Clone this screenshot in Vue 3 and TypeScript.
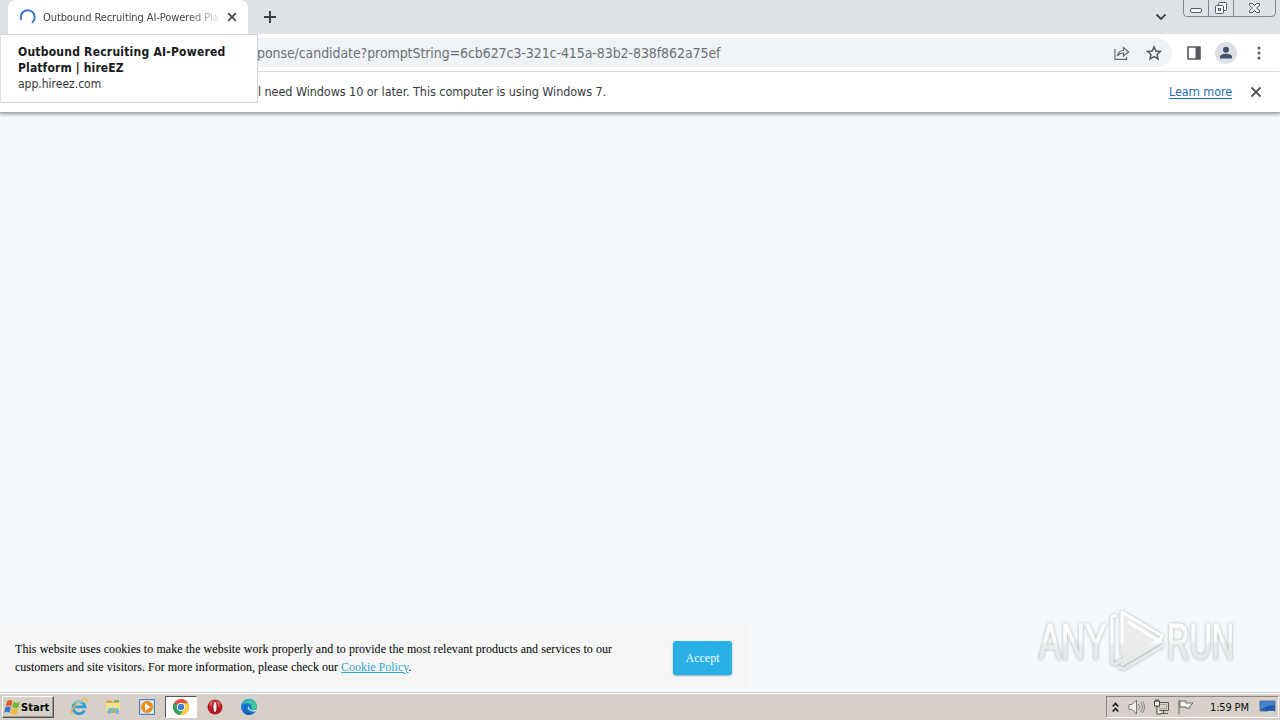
<script setup lang="ts">
const address: string = 'ponse/candidate?promptString=6cb627c3-321c-415a-83b2-838f862a75ef'
const clock: string = '1:59 PM'
</script>

<template>
  <div class="screen">
    <header class="tabs">
      <div class="tab">
        <svg class="spinner" width="18" height="18" viewBox="0 0 18 18"><path d="M2.300 12A7 7 0 1 1 13 14.700" fill="none" stroke="#3978c8" stroke-width="2"/></svg>
        <span class="tab-title">Outbound Recruiting AI-Powered Pla</span>
        <svg class="tab-close" width="10" height="10" viewBox="0 0 10 10"><path d="M1.200 1.200l7.600 7.600M8.800 1.200l-7.600 7.600" stroke="#45494d" stroke-width="1.700"/></svg>
      </div>
      <svg class="plus" width="14" height="14" viewBox="0 0 14 14"><path d="M7 1v12M1 7h12" stroke="#3c4043" stroke-width="2"/></svg>
      <svg class="chevron" width="12" height="8" viewBox="0 0 12 8"><path d="M1.500 1.500L6 6l4.500-4.500" fill="none" stroke="#3c4043" stroke-width="1.800"/></svg>
      <svg class="window-controls" width="94" height="18" viewBox="0 0 94 18">
        <g fill="none" stroke="#80858d">
          <path d="M.5 0v13q0 3.500 3 3.500h85q4 0 4-3.500V0M25.500 0v16M50.500 0v16"/>
          <g stroke="#555b64"><rect x="7.500" y="8.500" width="11" height="4" rx="1.500" fill="#f5f6f8"/><rect x="35.500" y="2.500" width="8" height="8" rx="1" fill="#f5f6f8"/><rect x="32.500" y="5.500" width="8" height="8" rx="1" fill="#f5f6f8"/><rect x="35.500" y="8.500" width="2" height="2"/>
          <path d="M66.500 3.500h3l2 2 2-2h3v2l-3 2.500 3 2.500v2h-3l-2-2-2 2h-3v-2l3-2.500-3-2.500z" fill="#f5f6f8"/></g>
        </g>
      </svg>
    </header>

    <nav class="toolbar">
      <div class="omnibox">
        <span class="url">{{ address }}</span>
        <svg class="share" width="16" height="16" viewBox="0 0 16 16" fill="none" stroke="#62666b" stroke-width="1.200"><path d="M1 4v10.300h11.500V12M3.500 11c.5-4 2.500-5.500 6-5.500V2.500l5 4.500-5 4V8C7 8 5 8.800 3.500 11z"/></svg>
        <svg class="star" width="16" height="16" viewBox="0 0 16 16"><path d="M8 1.800l1.850 4.150 4.600.45-3.450 3.050 1 4.500L8 11.600l-4 2.350 1-4.500L1.550 6.400l4.600-.45z" fill="none" stroke="#55595e" stroke-width="1.500"/></svg>
      </div>
      <svg class="panel" width="14" height="14" viewBox="0 0 14 14"><path d="M1 1h12v12H1z" fill="none" stroke="#55595e" stroke-width="1.600"/><path d="M8.500 1H13v12H8.500z" fill="#55595e"/></svg>
      <svg class="avatar" width="22" height="22" viewBox="0 0 22 22"><circle cx="11" cy="11" r="11" fill="#dde0e5"/><circle cx="11" cy="7.800" r="3" fill="#46516c"/><path d="M5 16.500v-1.700c0-4 12-4 12 0v1.700z" fill="#46516c"/></svg>
      <svg class="menu" width="4" height="14" viewBox="0 0 4 14" fill="#55595e"><circle cx="2" cy="2" r="1.500"/><circle cx="2" cy="7" r="1.500"/><circle cx="2" cy="12" r="1.500"/></svg>
    </nav>

    <section class="infobar">
      <span class="notice">l need Windows 10 or later. This computer is using Windows 7.</span>
      <a class="learn">Learn more</a>
      <svg class="info-close" width="12" height="12" viewBox="0 0 12 12"><path d="M1.500 1.500l9 9M10.500 1.500l-9 9" stroke="#55595e" stroke-width="1.900"/></svg>
    </section>

    <main class="page">
      <section class="cookies">
        <p class="cookie-copy"><span class="line-one">This website uses cookies to make the website work properly and to provide the most relevant products and services to our</span><br><span class="line-two">customers and site visitors. For more information, please check our <a>Cookie Policy</a>.</span></p>
        <button class="accept">Accept</button>
      </section>
      <svg class="watermark" width="230" height="76" viewBox="0 0 230 76">
        <defs>
          <linearGradient id="fade" gradientUnits="userSpaceOnUse" x1="0" y1="10" x2="0" y2="66"><stop offset="0" stop-color="#fff"/><stop offset=".5" stop-color="#fdfdfd"/><stop offset=".58" stop-color="#ebecec"/><stop offset="1" stop-color="#e5e7e8"/></linearGradient>
          <linearGradient id="letters" gradientUnits="userSpaceOnUse" x1="0" y1="-36" x2="0" y2="0"><stop offset="0" stop-color="#fff"/><stop offset=".5" stop-color="#fafafa"/><stop offset=".6" stop-color="#ebecec"/><stop offset="1" stop-color="#e5e7e8"/></linearGradient>
          <filter id="glow" x="-10%" y="-20%" width="120%" height="140%"><feDropShadow dx="0" dy="0" stdDeviation="1.800" flood-color="#8f959a" flood-opacity=".8"/></filter>
        </defs>
        <g filter="url(#glow)">
          <text class="brand" transform="translate(10 55.500) scale(.66 1)">ANY</text>
          <text class="brand" transform="translate(138 55.500) scale(.62 1)">RUN</text>
          <path d="M94 10L132 36 94 60Z" fill="#f2f4f5" fill-opacity=".8"/>
          <g fill="none" stroke="url(#fade)" stroke-width="3.200" stroke-linejoin="round"><path d="M87 12l-4 2v46l3 1L132 36M93 52V9l40 24-3 5-31-19M133 38L92 62M135 42L95 66l-6-2"/></g>
        </g>
      </svg>
    </main>

    <footer class="taskbar">
      <button class="start">
        <svg width="17" height="17" viewBox="0 0 16 16"><path d="M3 2q3-2 5 0L6.800 7q-2-2-5.300 0z" fill="#e65b28"/><path d="M9 2.500q3 2 6 0L13.500 8Q10 9.500 7.800 7.500z" fill="#79b82c"/><path d="M1.300 8Q4 6 6.500 8L5 13q-2.500-2-5 0z" fill="#3976d0"/><path d="M7.500 8.500q3 2 6 .5L12 14q-3 1.500-6-.5z" fill="#f1bd28"/></svg><span>Start</span>
      </button>
      <div class="launchers">
        <span class="app"><svg width="18" height="18" viewBox="0 0 18 18"><path d="M14.500 12.300A6 6 0 1 1 15 8.800H5" fill="none" stroke="#359bd5" stroke-width="2.800"/><path d="M4 15C-1 18 1 12 5 7.500 9 3 16-1 17 2c.4 1-.3 2-.8 3" fill="none" stroke="#e5bd48" stroke-width="1.300"/><path d="M4 6a6 6 0 0 1 9-1" fill="none" stroke="#a2e5fc"/></svg></span>
        <span class="app"><svg width="18" height="18" viewBox="0 0 18 18"><path d="M2 3l5-1 1 2h7v11H3z" fill="#d5ac43"/><path d="M2 5h14v8H2z" fill="#f6e28c"/><path d="M4 16v-4q0-2 2-2h7q2 0 2 2v4h-3v-3H7v3z" fill="#75bdd6"/><path d="M10 2h5v2h-5z" fill="#65b97a"/></svg></span>
        <span class="app"><svg width="18" height="18" viewBox="0 0 18 18"><path d="M1.500 1.500h15v15h-15z" fill="#b9d8ef" stroke="#4e83b5"/><path d="M3 3h12v12H3z" fill="#e4f0f7"/><circle cx="9" cy="9" r="6" fill="#f48c16"/><path d="M7 5.300L12.500 9 7 12.700z" fill="#fff"/></svg></span>
        <span class="app active"><svg width="18" height="18" viewBox="0 0 18 18"><circle cx="9" cy="9" r="8" fill="#e54c3b"/><path d="M2.100 5L9 9l3.500 2-4.500 6A8 8 0 0 1 2.100 5z" fill="#32a35a"/><path d="M9 5.200h7A8 8 0 0 1 8 17l4.300-6z" fill="#f7cf39"/><circle cx="9" cy="9" r="4.200" fill="#fff"/><circle cx="9" cy="9" r="3.200" fill="#4081d7"/></svg></span>
        <span class="app"><svg width="18" height="18" viewBox="0 0 18 18"><circle cx="9" cy="9" r="7.500" fill="#bd1b24"/><path d="M3 5q6-5 12 0L13 9H5z" fill="#d95b5f"/><ellipse cx="9" cy="9" rx="3" ry="6" fill="#8e1119"/><ellipse cx="9" cy="9" rx="1.600" ry="5" fill="#f7eeee"/></svg></span>
        <span class="app"><svg width="18" height="18" viewBox="0 0 18 18"><circle cx="9" cy="9" r="8" fill="#1878ce"/><path d="M2 6C5-1 16 0 17 8c0 4-3 5-6 4 3-5-3-8-9-6z" fill="#45c49b"/><path d="M2 6C5-1 12 0 14 3 9 2 5 3 2 6z" fill="#29a9dc"/><path d="M8 7c-5 3-1 9 6 7-2 2-4 3-6 3-5-1-6-7-3-9 1-1 3-1 3-1z" fill="#1763b7"/><path d="M9 8c-1 4 4 6 8 3-1 3-4 3-6 2-3-1-4-3-2-5z" fill="#e4f3f5"/></svg></span>
      </div>
      <div class="tray">
        <svg class="up" width="7" height="11" viewBox="0 0 7 11" fill="none" stroke="#171717" stroke-width="1.600"><path d="M.7 4.500l2.800-3 2.800 3M.7 9.500l2.800-3 2.800 3"/></svg>
        <svg class="sound" width="17" height="16" viewBox="0 0 17 16"><path d="M1 5.500h3L8.500 1v14L4 10.500H1z" fill="#f4f2ec" stroke="#777"/><path d="M10.500 5q2 3 0 6M12.500 3q4 5 0 10M14.500 2q4 6 0 12" fill="none" stroke="#888"/></svg>
        <svg class="network" width="17" height="16" viewBox="0 0 17 16"><path d="M4.500 3.500h11v8h-11zM7 14.500h8M10.500 12v2" fill="#d6d2ca" stroke="#555"/><path d="M6.500 5.500h7v4h-7z" fill="none" stroke="#aaa69f"/><path d="M1.500 2v5h5V2zM3 0v3M5 0v3M4 7v8h4" fill="#f5f2ed" stroke="#444"/></svg>
        <svg class="flag" width="17" height="16" viewBox="0 0 17 16"><path d="M2 1v14M3 2h6v2h7l-3 3v2H9V8H3z" fill="#f7f5ef" stroke="#666"/></svg>
        <span class="time">{{ clock }}</span>
        <svg class="desktop" width="17" height="14" viewBox="0 0 17 14"><path d="M1 1h15v10H1z" fill="#2159ab" stroke="#587995"/><path d="M1.500 1.500h14V5q-8 0-14 5z" fill="#4483ca"/><path d="M9 11h6v2H9z" fill="#c8d8e5"/></svg>
      </div>
    </footer>

    <aside class="tooltip"><strong><span class="tip-one">Outbound Recruiting AI-Powered</span><br><span class="tip-two">Platform | hireEZ</span></strong><span class="domain">app.hireez.com</span></aside>
  </div>
</template>

<style scoped>
* { box-sizing: border-box; }
svg { display: block; flex: none; }
button { appearance: none; }
.screen { position: relative; width: 1280px; height: 720px; display: flex; flex-direction: column; overflow: hidden; font-family: "DejaVu Sans Condensed", "DejaVu Sans", sans-serif; font-stretch: condensed; white-space: nowrap; background: #f5f9fc; }
.tabs { height: 34px; background: #dee1e6; display: flex; padding-left: 8px; flex: none; }
.tab { width: 240px; height: 34px; background: white; border-radius: 8px 8px 0 0; display: flex; align-items: center; padding-left: 11px; }
.tab-title { width: 178px; margin-left: 6px; overflow: hidden; font-size: 11px; letter-spacing: -.09px; color: #404347; mask-image: linear-gradient(to right, #000 145px, transparent 180px); }
.tab-close { margin-left: 6px; }
.plus { margin: 10px 0 0 15px; }
.chevron { margin: 13px 16px 0 auto; }
.window-controls { margin-right: 3px; }
.toolbar { height: 38px; background: #fff; border-bottom: 1px solid #d9dbde; display: flex; align-items: center; flex: none; }
.omnibox { width: 1172px; height: 29px; border-radius: 0 15px 15px 0; background: #f0f3f5; display: flex; align-items: center; padding-left: 257px; }
.url { font-size: 14px; color: #6b7075; letter-spacing: -.08px; }
.share { margin-left: auto; }
.star { margin: 0 10px 0 16px; }
.panel { margin-left: 15px; }
.avatar { margin-left: 14px; }
.menu { margin-left: 20px; }
.infobar { height: 41px; background: #fff; border-bottom: 1px solid #a9abad; box-shadow: 0 2px 3px #adb1b5; display: flex; align-items: center; padding-left: 258px; flex: none; position: relative; }
.notice { font-size: 12.500px; color: #37393c; letter-spacing: -.07px; padding-bottom: 2px; }
.learn { color: #286ab0; font-size: 12.500px; text-decoration: underline; text-underline-offset: 2px; margin-left: auto; letter-spacing: -.1px; padding-bottom: 2px; }
.info-close { margin: 0 18px 0 18px; }
.page { flex: 1; display: flex; align-items: flex-end; background: #f5f9fc; }
.cookies { width: 748px; height: 64px; margin-bottom: 3px; display: flex; align-items: center; justify-content: space-between; padding: 1px 16px 0 15px; background: #f6f6f6; }
.cookie-copy { margin: 0; font: 12px/18px "Liberation Serif", serif; color: #000; }
.line-one { letter-spacing: .06px; }
.cookie-copy a { color: #33a5cf; text-decoration: underline; }
.accept { width: 59px; height: 34px; border: 0; border-radius: 3px; background: #29b1e5; box-shadow: 0 1px 2px #98aeb8; color: #f4fcff; font: 12px "Liberation Serif", serif; padding: 2px 0 0; }
.watermark { margin: 0 0 13px 281px; }
.brand { font: 50px "Liberation Sans Narrow", "Liberation Sans", sans-serif; fill: url(#letters); stroke: url(#letters); stroke-width: 1.200px; }
.taskbar { height: 28px; flex: none; background: #d6d0c8; border-top: 1px solid #d0cdc7; box-shadow: inset 0 1px #fff; display: flex; align-items: center; }
.start { width: 52px; height: 22px; margin: 1px 0 0 2px; padding: 0 1px; display: flex; align-items: center; border: 1px solid; border-color: #fff #555 #555 #fff; box-shadow: inset -1px -1px #99958e; background: #d6d0c8; color: #000; font: bold 11px "DejaVu Sans Condensed", sans-serif; letter-spacing: .05px; }
.launchers { display: flex; padding-left: 9px; align-self: stretch; align-items: center; gap: 2px; }
.app { width: 32px; height: 22px; display: flex; align-items: center; justify-content: center; }
.active { border: 1px solid; border-color: #555 #fff #fff #555; background: #fff; }
.tray { width: 173px; height: 22px; margin: 1px 1px 0 auto; border: 1px solid; border-color: #8b8780 #fff #fff #8b8780; display: flex; align-items: center; padding-left: 5px; }
.sound { margin-left: 9px; }
.network { margin-left: 8px; }
.flag { margin-left: 7px; }
.time { margin-left: 16px; width: 40px; font-size: 11px; letter-spacing: -.15px; color: #111; }
.desktop { margin-left: 9px; }
.tooltip { position: absolute; top: 34px; left: 0; width: 258px; height: 69px; padding: 9px 17px 7px; background: #fff; border: 1px solid #d0d2d4; border-left-color: #dedfe1; font-size: 12px; line-height: 16px; color: #17191b; }
.tooltip strong, .domain { display: block; }
.tip-one { letter-spacing: .23px; }
.tip-two { letter-spacing: .14px; }
.domain { color: #333538; }
</style>
